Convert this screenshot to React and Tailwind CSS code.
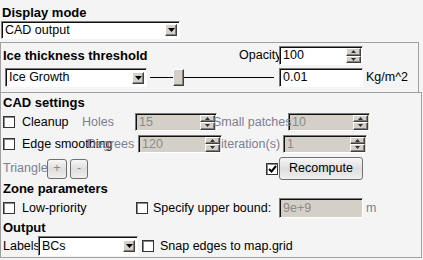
import React from 'react';

const sunken = 'border border-t-[#7a7a7a] border-l-[#7a7a7a] border-b-white border-r-white shadow-[inset_1px_1px_0_#101010]';
const raised = 'bg-[#d4d0c8] border border-t-white border-l-white border-b-[#404040] border-r-[#404040] shadow-[inset_-1px_-1px_0_#808080]';
const dim = 'text-[#7e7e92]';

function Arrow({ up, size = 'small' }) {
    if (size === 'big') {
        return (
            <svg width="7" height="4" viewBox="0 0 7 4">
                <path d="M0 0 H7 L3.5 4 Z" fill="#000" />
            </svg>
        );
    }
    return (
        <svg width="5" height="3" viewBox="0 0 5 3">
            <path d={up ? 'M0 3 H5 L2.5 0 Z' : 'M0 0 H5 L2.5 3 Z'} fill="#303030" />
        </svg>
    );
}

function Choice({ value, className }) {
    return (
        <div className={`flex items-center bg-white ${sunken} ${className}`}>
            <span className="flex-1 pl-[3px] leading-none text-black">{value}</span>
            <div className={`w-[12px] h-[12px] mr-[2px] flex items-center justify-center ${raised}`}>
                <Arrow size="big" />
            </div>
        </div>
    );
}

function Spin({ value, disabled, className }) {
    return (
        <div className={`flex items-center ${sunken} ${disabled ? 'bg-[#d4d0c8] text-[#8a8a8a]' : 'bg-white text-black'} ${className}`}>
            <span className="flex-1 pl-[3px] leading-none">{value}</span>
            <div className="flex flex-col mr-[1px] h-[15px] w-[15px]">
                <div className={`flex-1 flex items-center justify-center ${raised}`}>
                    <Arrow up />
                </div>
                <div className={`flex-1 flex items-center justify-center ${raised}`}>
                    <Arrow />
                </div>
            </div>
        </div>
    );
}

function Input({ value, disabled, className }) {
    return (
        <div className={`flex items-center ${sunken} ${disabled ? 'bg-[#d4d0c8] text-[#8a8a8a]' : 'bg-white text-black'} ${className}`}>
            <span className="pl-[3px] leading-none">{value}</span>
        </div>
    );
}

function Check({ checked, className = '' }) {
    return (
        <div className={`w-[12px] h-[12px] shrink-0 bg-white border border-[#333] shadow-[inset_1px_1px_0_#888] flex items-center justify-center ${className}`}>
            {checked && (
                <svg width="9" height="8" viewBox="0 0 9 8">
                    <path d="M1 4 L3.5 6.5 L8 1" stroke="#000" strokeWidth="2" fill="none" />
                </svg>
            )}
        </div>
    );
}

function Button({ children, className, textClass = 'text-black' }) {
    return (
        <div className={`flex items-center justify-center rounded-[3px] border border-[#707070] bg-gradient-to-b from-[#f7f7f7] via-[#dedede] to-[#efefef] ${textClass} ${className}`}>
            {children}
        </div>
    );
}

function Title({ children, className = '' }) {
    return <div className={`h-[15px] text-[13px] font-bold leading-[15px] text-black ml-[2px] ${className}`}>{children}</div>;
}

export default function App() {
    return (
        <div className="w-[423px] h-[260px] overflow-hidden bg-[#f4f4f4] text-[12.5px] text-black font-['Liberation_Sans',Arial,sans-serif] flex flex-col">
            <Title className="mt-[5px]">Display mode</Title>
            <Choice value="CAD output" className="mt-[1px] ml-[1px] w-[179px] h-[18px]" />

            {/* ice thickness group */}
            <div className="mt-[3px] w-[419px] h-[50px] shrink-0 border-t border-l border-r border-[#a0a0a0] flex flex-col">
                <div className="mt-[3px] h-[19px] flex items-center">
                    <div className="w-[236px] h-[15px] ml-[2px] text-[13px] font-bold leading-[15px] whitespace-nowrap">Ice thickness threshold</div>
                    <span className="w-[38px] text-right leading-none">Opacity</span>
                    <Spin value="100" className="ml-[2px] w-[84px] h-[19px]" />
                </div>
                <div className="mt-[3px] h-[19px] flex items-center">
                    <Choice value="Ice Growth" className="ml-[4px] w-[142px] h-[19px]" />
                    <div className="ml-[3px] w-[124px] h-[19px] flex items-center">
                        <div className="w-[23px] h-px bg-black" />
                        <div className={`w-[11px] h-[17px] ${raised}`} />
                        <div className="flex-1 h-px bg-black" />
                    </div>
                    <Input value="0.01" className="ml-[5px] w-[84px] h-[19px]" />
                    <span className="ml-[3px] leading-none">Kg/m^2</span>
                </div>
            </div>

            {/* cad / zone / output group */}
            <div className="w-[422px] h-[166px] shrink-0 border border-[#a0a0a0] flex flex-col whitespace-nowrap">
                <Title className="mt-[2px]">CAD settings</Title>

                <div className="mt-[3px] h-[18px] flex items-center">
                    <Check className="ml-[2px]" />
                    <span className="ml-[7px] w-[60px] leading-none">Cleanup</span>
                    <span className={`w-[53px] leading-none ${dim}`}>Holes</span>
                    <Spin value="15" disabled className="w-[82px] h-[18px]" />
                    <span className={`ml-[-4px] w-[75px] leading-none relative ${dim}`}>Small patches</span>
                    <Spin value="10" disabled className="w-[82px] h-[18px]" />
                </div>

                <div className="mt-[4px] h-[18px] flex items-center">
                    <Check className="ml-[2px]" />
                    <span className="ml-[7px] w-[65px] leading-none">Edge smoothing</span>
                    <span className={`w-[51px] leading-none relative ${dim}`}>Degrees</span>
                    <Spin value="120" disabled className="w-[84px] h-[18px]" />
                    <span className={`ml-[-1px] w-[62px] leading-none relative ${dim}`}>iteration(s)</span>
                    <Spin value="1" disabled className="w-[84px] h-[18px]" />
                </div>

                <div className="mt-[4px] h-[23px] flex items-center">
                    <span className={`ml-[2px] w-[44px] leading-none ${dim}`}>Triangle</span>
                    <Button className="w-[20px] h-[20px]" textClass="text-[#8a8a8a]">+</Button>
                    <Button className="ml-[3px] w-[18px] h-[20px]" textClass="text-[#8a8a8a]">-</Button>
                    <Check checked className="ml-[178px]" />
                    <Button className="ml-[1px] w-[84px] h-[23px]">Recompute</Button>
                </div>

                <Title className="mt-[1px]">Zone parameters</Title>

                <div className="mt-[2px] h-[20px] flex items-center">
                    <Check className="ml-[2px]" />
                    <span className="ml-[7px] w-[114px] leading-none">Low-priority</span>
                    <Check />
                    <span className="ml-[5px] w-[126px] leading-none">Specify upper bound:</span>
                    <Input value="9e+9" disabled className="w-[84px] h-[20px]" />
                    <span className={`ml-[3px] leading-none ${dim}`}>m</span>
                </div>

                <Title className="mt-[2px]">Output</Title>

                <div className="mt-[1px] h-[20px] flex items-center">
                    <span className="ml-[2px] w-[35px] leading-none">Labels</span>
                    <Choice value="BCs" className="w-[100px] h-[20px]" />
                    <Check className="ml-[4px]" />
                    <span className="ml-[6px] leading-none">Snap edges to map.grid</span>
                </div>
            </div>
        </div>
    );
}
